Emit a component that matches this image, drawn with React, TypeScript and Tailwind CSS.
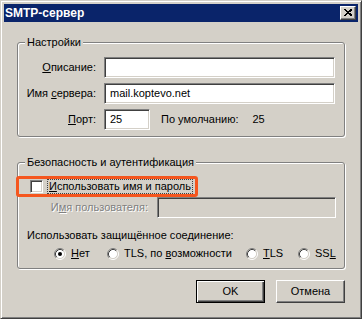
import React from "react";

const sunken =
  "border border-t-[#808080] border-l-[#808080] border-r-white border-b-white shadow-[inset_1px_1px_0_#404040,inset_-1px_-1px_0_#d4d0c8]";

function Radio({ checked }: { checked?: boolean }) {
  return (
    <svg width="12" height="12" viewBox="0 0 12 12" className="shrink-0">
      <circle cx="6" cy="6" r="4.5" fill="#fff" />
      <path d="M2.11 9.89 A5.5 5.5 0 0 1 9.89 2.11" fill="none" stroke="#808080" strokeWidth="1" />
      <path d="M2.82 9.18 A4.5 4.5 0 0 1 9.18 2.82" fill="none" stroke="#404040" strokeWidth="1" />
      <path d="M9.89 2.11 A5.5 5.5 0 0 1 2.11 9.89" fill="none" stroke="#ffffff" strokeWidth="1" />
      <path d="M9.18 2.82 A4.5 4.5 0 0 1 2.82 9.18" fill="none" stroke="#d4d0c8" strokeWidth="1" />
      {checked && <circle cx="6" cy="6" r="2" fill="#000" />}
    </svg>
  );
}

function Group({
  title,
  className,
  children,
}: {
  title: string;
  className?: string;
  children: React.ReactNode;
}) {
  return (
    <div
      className={
        "relative ml-[13px] w-[328px] border border-[#808080] rounded-[3px] shadow-[inset_1px_1px_0_#fff,1px_1px_0_#fff] " +
        (className ?? "")
      }
    >
      <span className="absolute top-[-7px] left-[7px] bg-[#d4d0c8] px-[2px] leading-[13px]">{title}</span>
      {children}
    </div>
  );
}

export default function App() {
  return (
    <div className="w-[362px] h-[319px] bg-[#d4d0c8] border border-t-[#d4d0c8] border-l-[#d4d0c8] border-r-[#404040] border-b-[#404040] shadow-[inset_1px_1px_0_#fff,inset_-1px_-1px_0_#808080] p-[3px] font-['Liberation_Sans',Arial,sans-serif] text-[11px] leading-[13px] text-black flex flex-col">
      {/* Title bar */}
      <div className="h-[18px] bg-[#0a246a] flex items-center justify-between pl-[1px] pr-[2px] shrink-0">
        <span className="text-white font-bold text-[12px] leading-[14px]">SMTP-сервер</span>
        <div className="w-[16px] h-[14px] bg-[#d4d0c8] border border-t-white border-l-white border-r-[#404040] border-b-[#404040] shadow-[inset_-1px_-1px_0_#808080] flex items-center justify-center">
          <svg width="8" height="7" viewBox="0 0 8 7" className="mb-[1px] -ml-[1px]">
            <path d="M0.5 0.5 L7 6.5 M1.5 0.5 L8 6.5 M7 0.5 L0.5 6.5 M8 0.5 L1.5 6.5" stroke="#000" strokeWidth="1" shapeRendering="crispEdges" fill="none" />
          </svg>
        </div>
      </div>

      {/* Group 1 */}
      <Group title="Настройки" className="mt-[20px] h-[95px] pt-[14px]">
        <div className="flex flex-col gap-[5px]">
          <div className="flex items-center h-[21px]">
            <span className="w-[78px] text-right">
              <u className="underline">О</u>писание:
            </span>
            <div className={"ml-[8px] w-[231px] h-[21px] bg-white " + sunken} />
          </div>
          <div className="flex items-center h-[21px]">
            <span className="w-[78px] text-right">
              Имя <u className="underline">с</u>ервера:
            </span>
            <div className={"ml-[8px] w-[231px] h-[21px] bg-white flex items-center pl-[5px] " + sunken}>
              mail.koptevo.net
            </div>
          </div>
          <div className="flex items-center h-[21px]">
            <span className="w-[78px] text-right">
              <u className="underline">П</u>орт:
            </span>
            <div className={"ml-[8px] w-[46px] h-[21px] bg-white flex items-center pl-[5px] " + sunken}>25</div>
            <span className="ml-[11px]">По умолчанию:</span>
            <span className="ml-[14px]">25</span>
          </div>
        </div>
      </Group>

      {/* Group 2 */}
      <Group title="Безопасность и аутентификация" className="mt-[25px] h-[107px] pt-[13px]">
        <div className="-ml-[2px] w-[182px] h-[21px] border-[3px] border-[#f5561e] rounded-[3px] flex items-center">
          <div className={"ml-[11px] w-[13px] h-[13px] bg-white " + sunken} />
          <span className="ml-[4px] px-[1px] border border-dotted border-[#404040] leading-[13px]">
            <u className="underline">И</u>спользовать имя и пароль
          </span>
        </div>
        <div className="flex items-center h-[21px]">
          <span className="w-[130px] text-right text-[#808080] [text-shadow:1px_1px_0_#fff]">
            И<u className="underline">м</u>я пользователя:
          </span>
          <div className={"ml-[9px] w-[179px] h-[21px] bg-[#d4d0c8] " + sunken} />
        </div>
        <div className="mt-[11px] ml-[9px]">Использовать защищённое соединение:</div>
        <div className="mt-[5px] ml-[36px] flex items-center h-[13px]">
          <div className="w-[53px] flex items-center gap-[5px]">
            <Radio checked />
            <span>
              <u className="underline">Н</u>ет
            </span>
          </div>
          <div className="w-[139px] flex items-center gap-[5px]">
            <Radio />
            <span>
              TLS, по <u className="underline">в</u>озможности
            </span>
          </div>
          <div className="w-[52px] flex items-center gap-[5px]">
            <Radio />
            <span>
              <u className="underline">T</u>LS
            </span>
          </div>
          <div className="flex items-center gap-[5px]">
            <Radio />
            <span>
              SS<u className="underline">L</u>
            </span>
          </div>
        </div>
      </Group>

      {/* Buttons */}
      <div className="mt-[11px] ml-[13px] w-[328px] flex justify-end gap-[11px]">
        <button className="w-[69px] h-[23px] border border-black shadow-[inset_1px_1px_0_#fff,inset_-1px_-1px_0_#404040,inset_-2px_-2px_0_#808080] flex items-center justify-center">
          OK
        </button>
        <button className="w-[69px] h-[23px] border border-t-white border-l-white border-r-[#404040] border-b-[#404040] shadow-[inset_-1px_-1px_0_#808080] flex items-center justify-center">
          Отмена
        </button>
      </div>
    </div>
  );
}
